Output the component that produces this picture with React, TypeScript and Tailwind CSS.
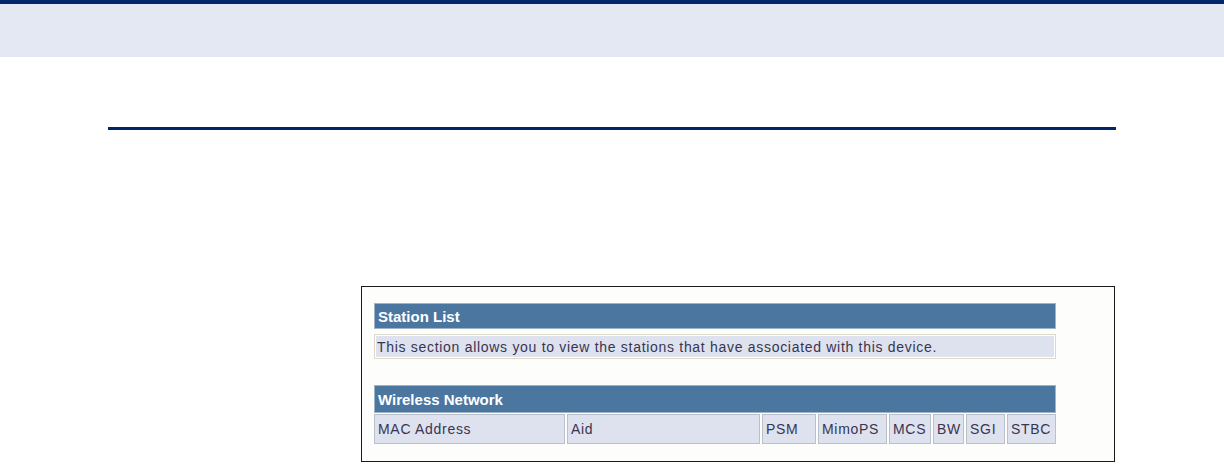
import React from "react";

const cols: { label: string; w: number }[] = [
  { label: "MAC Address", w: 191 },
  { label: "Aid", w: 193 },
  { label: "PSM", w: 54 },
  { label: "MimoPS", w: 69 },
  { label: "MCS", w: 42 },
  { label: "BW", w: 31 },
  { label: "SGI", w: 39 },
  { label: "STBC", w: 49 },
];

const widthClass: Record<number, string> = {
  191: "w-[191px]",
  193: "w-[193px]",
  54: "w-[54px]",
  69: "w-[69px]",
  42: "w-[42px]",
  31: "w-[31px]",
  39: "w-[39px]",
  49: "w-[49px]",
};

export default function App() {
  return (
    <div className="w-[1224px] h-[464px] bg-white overflow-hidden" style={{ fontFamily: '"Liberation Sans", Arial, sans-serif' }}>
      <div className="h-[4px] bg-[#002868]" />
      <div className="h-[53px] bg-[#e4e8f2]" />
      <div className="ml-[108px] mt-[70px] w-[1008px] h-[3px] bg-[#002868]" />
      <div className="ml-[361px] mt-[156px] w-[754px] h-[176px] border border-[#1a1a1a] bg-[#fdfefc] pt-[16px] pl-[12px]">
        <div className="w-[682px]">
          <div className="h-[26px] bg-[#4a76a0] border border-[#9fb2c6] flex items-center pl-[3px] text-[15px] font-bold text-white leading-none">
            Station List
          </div>
          <div className="mt-[5px] h-[25px] border border-[#ddd9c9] bg-white p-[1px]">
            <div className="h-full bg-[#dde2ee] flex items-center pl-[1px] text-[14px] text-[#3a3450] leading-none tracking-[0.7px]">
              This section allows you to view the stations that have associated with this device.
            </div>
          </div>
          <div className="mt-[26px] h-[28px] bg-[#4a76a0] border border-[#9fb2c6] flex items-center pl-[3px] text-[15px] font-bold text-white leading-none">
            Wireless Network
          </div>
          <div className="mt-[1px] flex gap-[2px] h-[30px]">
            {cols.map((c) => (
              <div
                key={c.label}
                className={`${widthClass[c.w]} shrink-0 h-full bg-[#dde2ee] border border-[#b9c0cc] flex items-center pl-[3px] text-[14px] text-[#3a3450] leading-none tracking-[0.7px] whitespace-nowrap`}
              >
                {c.label}
              </div>
            ))}
          </div>
        </div>
      </div>
    </div>
  );
}
